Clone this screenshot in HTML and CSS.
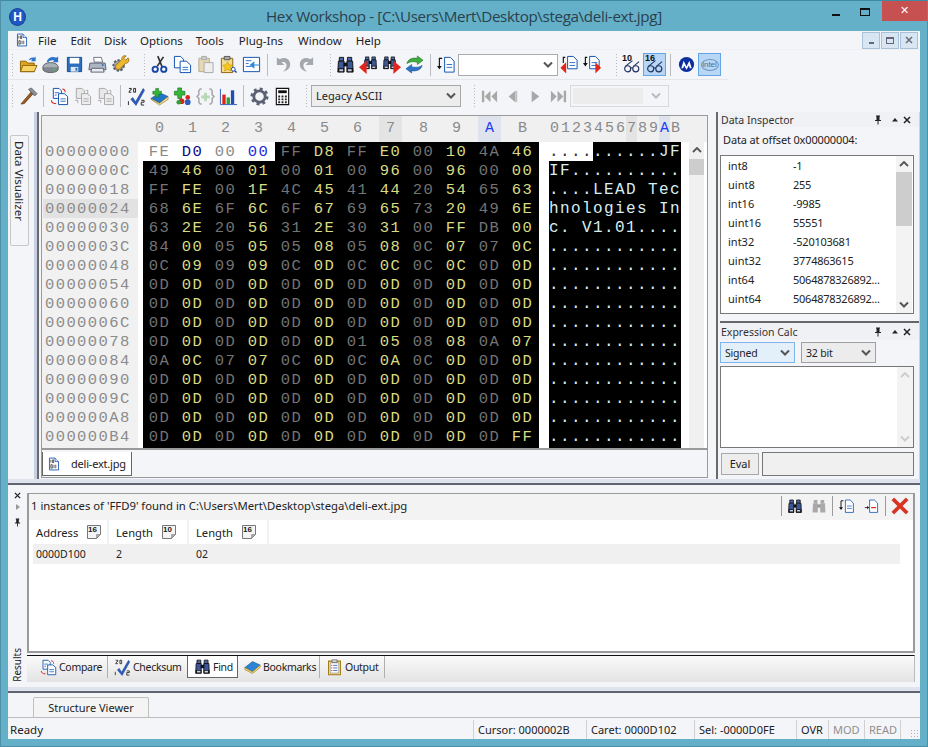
FILE: index.html
```html
<!DOCTYPE html>
<html lang="en">
<head>
<meta charset="utf-8">
<title>Hex Workshop</title>
<link rel="stylesheet" href="styles.css">
</head>
<body>
<svg class="defs" aria-hidden="true">
  <defs>
    <symbol id="doc" viewBox="0 0 20 20"><path d="M4 1.5h8l4.5 4.5v12.5H4z" fill="#fff" stroke="#0d4fb0"/><path d="M12 1.5V6h4.5" fill="#d6e6f8" stroke="#0d4fb0"/><path d="M6.5 9.5h7.5M6.5 12.5h7.5M6.5 15.5h7.5" stroke="#2a6fc8"/></symbol>
    <symbol id="bindoc" viewBox="0 0 20 20"><path d="M3.500 1.500h8l5 5v12h-13z" fill="#fff" stroke="#0d4fb0" stroke-width="1.200"/><path d="M11.500 1.500v5h5" fill="#d6e6f8" stroke="#0d4fb0"/><path d="M5.500 4v4M8 4h1.500v4H8zM5.500 11h2v5h-2zM10 11v5M12.500 11v5" fill="none" stroke="#222"/></symbol>
    <symbol id="folder" viewBox="0 0 20 20"><path d="M1.500 6.500h6l1.500 2h7v9h-14.500z" fill="#e0a51e" stroke="#8a6208"/><path d="M4 11h15l-3 6.500H1.500z" fill="#f7d463" stroke="#8a6208"/><path d="M10 6c1-3 4-4 6-3l1.500-1.500v5h-5l1.500-1.500c-1-.5-2.500 0-4 1z" fill="#2c74c9"/></symbol>
    <symbol id="disk" viewBox="0 0 20 20"><ellipse cx="9" cy="12.500" rx="8" ry="4.500" fill="#aab0b8" stroke="#5b6068"/><path d="M1 13v2c0 2 3.500 3.500 8 3.500s8-1.500 8-3.500v-2" fill="#80868e" stroke="#5b6068"/><circle cx="13" cy="15.500" r="1" fill="#3fd04a"/><path d="M5 7c1-4 6-6 10-4l2-1.500v6h-6l2-1.500c-3-1-5 0-6.500 1.500z" fill="#2c74c9"/></symbol>
    <symbol id="save" viewBox="0 0 20 20"><path d="M2.500 2.500h15v15h-15z" fill="#2c6dbd" stroke="#174a8c"/><path d="M5 3h10v6H5z" fill="#fff"/><path d="M6 12.500h8v5H6z" fill="#dfe6ef"/><path d="M11 13.500h2v3h-2z" fill="#2c6dbd"/></symbol>
    <symbol id="print" viewBox="0 0 20 20"><path d="M6 2.500h8l1.500 5h-9z" fill="#fff" stroke="#6b7280"/><path d="M2 8.500h16l1 7H1z" fill="#aeb6c2" stroke="#5a6270"/><path d="M4 14h12l1 4H3z" fill="#e9edf2" stroke="#5a6270"/><circle cx="15.500" cy="10.500" r="1" fill="#2c6dbd"/></symbol>
    <symbol id="tools" viewBox="0 0 20 20"><circle cx="8" cy="11" r="5.500" fill="#9ea4ad" stroke="#555a62" stroke-width="2" stroke-dasharray="2.500 1.500"/><circle cx="8" cy="11" r="2" fill="#f4f5f8"/><path d="M18 3l-2.500 2.500-2-2L16 1c-3-1-5 1-4.500 3.500L6 10c-1 1-2 3-.5 4.500S9 15 10 14l5.500-5.500C18 9 20 6 18 3z" fill="#edb82e" stroke="#8a6208" stroke-width=".8"/></symbol>
    <symbol id="cut" viewBox="0 0 20 20"><path d="M13 1.500L8 12M7 1.500l6 10.500" stroke="#333" stroke-width="1.800" fill="none" transform="rotate(8 10 10)"/><circle cx="5.500" cy="15" r="2.800" fill="none" stroke="#1546a8" stroke-width="2"/><circle cx="14.500" cy="15" r="2.800" fill="none" stroke="#1546a8" stroke-width="2"/></symbol>
    <symbol id="copy" viewBox="0 0 20 20"><path d="M1.500 1.500h6.500l3 3v9h-9.500z" fill="#fff" stroke="#0d4fb0"/><path d="M7.500 6.500h6.500l4.500 4v8h-11z" fill="#fff" stroke="#0d4fb0"/><path d="M10 13h6M10 15.500h6" stroke="#2a6fc8"/></symbol>
    <symbol id="paste" viewBox="0 0 20 20"><path d="M3 3.500h11v14H3z" fill="#e6d9b2" stroke="#b5ab90"/><path d="M6 1.500h5v3.500H6z" fill="#ccc" stroke="#aaa"/><path d="M8.500 8h9.500v10.500H8.500z" fill="#eee" stroke="#aaa"/></symbol>
    <symbol id="paste2" viewBox="0 0 20 20"><path d="M2.500 3.500h12v15h-12z" fill="#f3dc92" stroke="#8a6208"/><path d="M5.500 1.500h6v3.500h-6z" fill="#aaa" stroke="#555"/><path d="M9 7l1.600 3.300 3.600.5-2.600 2.500.6 3.600L9 15.200l-3.200 1.700.6-3.600-2.600-2.500 3.600-.5z" fill="#f9c714" stroke="#b98a00" stroke-width=".5"/><circle cx="15" cy="15" r="2" fill="#fff" stroke="#1546a8"/><path d="M16.500 16.500l2 2" stroke="#1546a8" stroke-width="1.500"/></symbol>
    <symbol id="insert" viewBox="0 0 20 20"><path d="M1.500 2.500h17v15h-17z" fill="#fff" stroke="#0d4fb0"/><path d="M4 6h6M4 9h3M4 12h6" stroke="#2a6fc8"/><path d="M19 10h-6V6.500L8 10.500l5 4V11h6z" fill="#2c88e0"/></symbol>
    <symbol id="undo" viewBox="0 0 20 20"><path d="M3 2.500v8h8L8 7.500c3-1 6 1 5 5-.5 2-2 3.500-3.500 5 5-1 8-4 7.500-8.500C16.500 4 11 1.500 6 4.500z" fill="#a4a8ac"/></symbol>
    <symbol id="redo" viewBox="0 0 20 20"><path d="M17 2.500v8H9l3-3c-3-1-6 1-5 5 .5 2 2 3.500 3.500 5-5-1-8-4-7.500-8.500C3.500 4 9 1.500 14 4.500z" fill="#a4a8ac"/></symbol>
    <symbol id="bino" viewBox="0 0 20 20"><path d="M3.500 2.500h4.500v4H3.500zM12 2.500h4.500v4H12z" fill="#4c68a8" stroke="#111"/><path d="M2.500 6.500h6v11.500h-6.500zM11.500 6.500h6l.5 11.500h-6.500z" fill="#3b5798" stroke="#111"/><path d="M8 8h4v4H8z" fill="#111"/><path d="M2 14h6.500v4H2zM11.500 14H18v4h-6.500z" fill="#111"/><path d="M3.500 15h4v2h-4zM12.500 15h4v2h-4z" fill="#c8d0e8"/></symbol>
    <symbol id="binog" viewBox="0 0 20 20"><path d="M3.500 2.500h4.500v4H3.500zM12 2.500h4.500v4H12z" fill="#a9a9a9"/><path d="M2.500 6.500h6v11.500h-6.500zM11.500 6.500h6l.5 11.500h-6.500z" fill="#a9a9a9"/><path d="M8 8h4v4H8z" fill="#999"/></symbol>
    <symbol id="binol" viewBox="0 0 20 20"><use href="#bino" x="4" y="0" width="16" height="16"/><path d="M8 6v14L0 13z" fill="#e3241b"/></symbol>
    <symbol id="binor" viewBox="0 0 20 20"><use href="#bino" x="0" y="0" width="16" height="16"/><path d="M12 6v14l8-7z" fill="#e3241b"/></symbol>
    <symbol id="replace" viewBox="0 0 20 20"><path d="M2 9c1-4 5-6.500 11-5.500V1l6 4.500-6 4.500V7.500C8 6.500 5 7 2 9z" fill="#3fae3f" stroke="#1c6e1c" stroke-width=".6"/><path d="M18 11c-1 4-5 6.500-11 5.500V19l-6-4.500L7 10v2.500c5 1 8 .5 11-1.500z" fill="#2c74c9" stroke="#174a8c" stroke-width=".6"/></symbol>
    <symbol id="goto" viewBox="0 0 20 20"><path d="M8 2.500h6l4 4v11.500h-10z" fill="#fff" stroke="#0d4fb0"/><path d="M10 10h6M10 13h6" stroke="#2a6fc8"/><path d="M5.500 3.500h-3v9" fill="none" stroke="#111" stroke-width="1.200"/><path d="M0 11.500h5L2.500 15z" fill="#111"/></symbol>
    <symbol id="prevd" viewBox="0 0 20 20"><path d="M8 1.500h6l4 4v9h-10z" fill="#fff" stroke="#0d4fb0"/><path d="M10 8h6M10 11h6" stroke="#2a6fc8"/><path d="M5.500 2.500h-2v6" fill="none" stroke="#111" stroke-width="1.200"/><path d="M6.500 7.500v12L.5 13.500z" fill="#e3241b"/></symbol>
    <symbol id="nextd" viewBox="0 0 20 20"><path d="M7 1.500h6l4 4v9H7z" fill="#fff" stroke="#0d4fb0"/><path d="M9 8h6M9 11h6" stroke="#2a6fc8"/><path d="M4.500 2.500h-2v7" fill="none" stroke="#111" stroke-width="1.200"/><path d="M0 8.500h5L2.500 12z" fill="#111"/><path d="M13 7.500v12l6-6z" fill="#e3241b"/></symbol>
    <symbol id="glass" viewBox="0 0 20 20"><circle cx="6" cy="14.500" r="3.200" fill="none" stroke="#23355f" stroke-width="1.200"/><circle cx="14.500" cy="14.500" r="3.200" fill="none" stroke="#23355f" stroke-width="1.200"/><path d="M9 14c1-1 1.500-1 2.500 0M3.500 12L11 6M12 12l6-5" fill="none" stroke="#23355f" stroke-width="1.100"/></symbol>
    <symbol id="moto" viewBox="0 0 20 20"><circle cx="10" cy="10" r="8" fill="#0b2fa0"/><path d="M4.500 14l2.500-8 3 6 3-6 2.500 8h-2l-1-3-2.500 4.500L7.500 11l-1 3z" fill="#fff"/></symbol>
    <symbol id="hammer" viewBox="0 0 20 20"><path d="M2 18l2-2.500L13 5l2 2-9.500 10.500z" fill="#9a5a22" stroke="#5f3610" stroke-width=".7"/><path d="M10 2.500l3-1.500 6 6-2.500 2.500z" fill="#8c8f94" stroke="#4a4c50" stroke-width=".7"/></symbol>
    <symbol id="compare" viewBox="0 0 20 20"><path d="M3.500 1.500h6l2.500 2.500v8h-8.500z" fill="#fff" stroke="#0d4fb0"/><path d="M9 7h6l3.500 3v8.500H9z" fill="#fff" stroke="#0d4fb0"/><path d="M11 12.500h5.500M11 15h5.500M5 6h4.500M5 8.500h2" stroke="#2a6fc8"/><path d="M13 2c2 0 3 1.500 3 3.500M1.500 14c0 2 1.500 3.500 5 3.500" fill="none" stroke="#d9231c" stroke-width="1.100"/></symbol>
    <symbol id="compareg" viewBox="0 0 20 20"><path d="M3.500 1.500h6l2.500 2.500v8h-8.500z" fill="#e8e8e8" stroke="#a8a8a8"/><path d="M9 7h6l3.500 3v8.500H9z" fill="#eee" stroke="#a8a8a8"/><path d="M11 12.500h5.500M11 15h5.500" stroke="#aaa"/><path d="M13.500 3.500h2v4M2 14h3v3" fill="none" stroke="#aaa"/></symbol>
    <symbol id="check" viewBox="0 0 20 20"><path d="M6 11l3 4.500L17 1.500l1.500 2L9.500 19.500 4 13z" fill="#2c5cc0" stroke="#12357c" stroke-width=".5"/><path d="M2 1.500h2.500v1.500H3.500L2 5.500h2.500M7 1.500h2v4H7zM1.500 15v4M15 14h3v2h-3v3h3" fill="none" stroke="#111" stroke-width=".9"/></symbol>
    <symbol id="book" viewBox="0 0 20 20"><path d="M1 12l9-6 9 4-9 7z" fill="#1f76c8" stroke="#0f4a86" stroke-width=".6"/><path d="M1 12l9 5 9-7v3l-9 6-9-6z" fill="#f1e2a6" stroke="#8a6208" stroke-width=".6"/><path d="M6 1.500h3v3h3v3H9v3H6V7.500H3v-3h3z" fill="#34b83a" stroke="#146f18" stroke-width=".6"/></symbol>
    <symbol id="bookm" viewBox="0 0 20 20"><path d="M1 10l9-7 9 4-9 8z" fill="#2b84d8" stroke="#0f4a86" stroke-width=".6"/><path d="M1 10l9 5 9-8v3l-9 7-9-4.500z" fill="#f1d97a" stroke="#8a6208" stroke-width=".6"/></symbol>
    <symbol id="plus" viewBox="0 0 20 20"><path d="M5 1h4v3.500h3.500v4H9V12H5V8.500H1.500v-4H5z" fill="#34b83a" stroke="#146f18" stroke-width=".7"/><circle cx="9" cy="15" r="3" fill="#d9231c"/><circle cx="15.500" cy="11" r="2.500" fill="#d9231c"/><circle cx="15.500" cy="16" r="3" fill="#2c5cc0"/><circle cx="6" cy="16" r="2.400" fill="#2fa033"/></symbol>
    <symbol id="brace" viewBox="0 0 20 20"><path d="M6 2H4.500L3 4v4l-2 2 2 2v4l1.500 2H6M14 2h1.500L17 4v4l2 2-2 2v4l-1.500 2H14" fill="none" stroke="#a8a8a8" stroke-width="1.600"/><path d="M8.500 6h3v3h3v3h-3v3h-3v-3h-3V9h3z" fill="#b8d8b8"/></symbol>
    <symbol id="chart" viewBox="0 0 20 20"><path d="M1.500 2v16.500H19" fill="none" stroke="#2c5cc0"/><path d="M3.500 8h3.500v10H3.500z" fill="#d9231c"/><path d="M8 11h3.500v7H8z" fill="#2fa033"/><path d="M12.500 3.500H16V18h-3.500z" fill="#1f4fb5"/></symbol>
    <symbol id="gear" viewBox="0 0 20 20"><circle cx="10" cy="10" r="6" fill="none" stroke="#5b6072" stroke-width="3"/><circle cx="10" cy="10" r="8" fill="none" stroke="#5b6072" stroke-width="3" stroke-dasharray="3 3.280"/><circle cx="10" cy="10" r="2.500" fill="#f4f5f8"/></symbol>
    <symbol id="calc" viewBox="0 0 20 20"><path d="M3.500 1.500h13v17h-13z" fill="#fff" stroke="#111" stroke-width="1.200"/><path d="M5.500 3.500h9v3h-9z" fill="#111"/><path d="M5.500 9h2v2h-2zM9 9h2v2H9zM12.500 9h2v2h-2zM5.500 12h2v2h-2zM9 12h2v2H9zM12.500 12h2v2h-2zM5.500 15h2v2h-2zM9 15h2v2H9zM12.500 15h2v2h-2z" fill="#222"/></symbol>
    <symbol id="first" viewBox="0 0 20 20"><path d="M2 4h2.500v12H2zM11 4v12L5 10zM18 4v12l-6-6z" fill="#a8a8a8"/></symbol>
    <symbol id="prev" viewBox="0 0 20 20"><path d="M13 4v12L6 10z" fill="#a8a8a8"/><path d="M13 4h2v12h-2z" fill="#c0c0c0"/></symbol>
    <symbol id="next" viewBox="0 0 20 20"><path d="M6 4v12l8-6z" fill="#a8a8a8"/></symbol>
    <symbol id="last" viewBox="0 0 20 20"><path d="M15.500 4H18v12h-2.500zM2 4v12l6-6zM9 4v12l6-6z" fill="#a8a8a8"/></symbol>
    <symbol id="output" viewBox="0 0 20 20"><path d="M3 2.500h14v16H3z" fill="#f8e7a8" stroke="#a07a10" stroke-width="1.200"/><path d="M5 4.500h10v12H5z" fill="#fff" stroke="#444" stroke-width=".5"/><path d="M7 1h6v3H7z" fill="#ddd" stroke="#444" stroke-width=".7"/><path d="M8.500 7.500h5M8.500 10.500h5M8.500 13.500h5" stroke="#2c5cc0"/><path d="M6 7.500h1.500M6 10.500h1.500M6 13.500h1.500" stroke="#d9231c"/></symbol>
    <symbol id="remove" viewBox="0 0 20 20"><path d="M7 2.500h6l4 4v11.500H7z" fill="#fff" stroke="#0d4fb0"/><path d="M9 12h6" stroke="#e3241b" stroke-width="1.500"/><path d="M1 12h4" stroke="#111"/><path d="M4 10l2.500 2-2.500 2z" fill="#111"/></symbol>
    <symbol id="bigx" viewBox="0 0 20 20"><path d="M1 3.500L3.500 1 10 7.500 16.500 1 19 3.500 12.500 10l6.500 6.500-2.500 2.500L10 12.500 3.500 19 1 16.500 7.500 10z" fill="#e0301e" stroke="#a81e10" stroke-width=".6"/></symbol>
    <symbol id="sort" viewBox="0 0 14 14"><path d="M.5.500h13v9l-4 4h-9z" fill="#f4f4f4" stroke="#777"/><path d="M9.500 13.500v-4h4z" fill="#aaa" stroke="#777" stroke-width=".5"/></symbol>
    <symbol id="pin" viewBox="0 0 8 10"><path d="M2 .5h4v1H5.500v3.500h1.500v1H1v-1h1.500V1.500H2zM3.500 6h1v3.500h-1z" fill="#222"/></symbol>
    <symbol id="tri" viewBox="0 0 8 8"><path d="M4 2l3 3.500H1z" fill="#222"/></symbol>
    <symbol id="x" viewBox="0 0 8 8"><path d="M1 1l6 6M7 1L1 7" stroke="#222" stroke-width="1.500"/></symbol>
    <symbol id="chev" viewBox="0 0 10 8"><path d="M1 1.500l4 4 4-4" fill="none" stroke="currentColor" stroke-width="2"/></symbol>
    <symbol id="chevup" viewBox="0 0 10 8"><path d="M1 6l4-4 4 4" fill="none" stroke="currentColor" stroke-width="1.800"/></symbol>
  </defs>
</svg>

<div class="window">
  <header class="titlebar">
    <span class="app-logo">H</span>
    <span class="title">Hex Workshop - [C:\Users\Mert\Desktop\stega\deli-ext.jpg]</span>
    <span class="winctl win-min"></span>
    <span class="winctl win-max"></span>
    <span class="winctl win-close">✕</span>
  </header>

  <div class="client">
    <nav class="menubar">
      <svg class="menu-icon"><use href="#bindoc"/></svg>
      <span class="m-file">File</span><span class="m-edit">Edit</span><span class="m-disk">Disk</span><span class="m-options">Options</span><span class="m-tools">Tools</span><span class="m-plug">Plug-Ins</span><span class="m-window">Window</span><span class="m-help">Help</span>
      <span class="mdi-buttons">
        <span class="mdi"><span class="mdi-min"></span></span>
        <span class="mdi"><span class="mdi-res"></span></span>
        <span class="mdi"><svg class="mdi-x"><use href="#x"/></svg></span>
      </span>
    </nav>

    <div class="toolbar tb-one">
      <span class="grip first-grip"></span>
      <span class="tb"><svg><use href="#folder"/></svg></span>
      <span class="tb"><svg><use href="#disk"/></svg></span>
      <span class="tb"><svg><use href="#save"/></svg></span>
      <span class="tb"><svg><use href="#print"/></svg></span>
      <span class="tb"><svg><use href="#tools"/></svg></span>
      <span class="grip"></span>
      <span class="tb"><svg><use href="#cut"/></svg></span>
      <span class="tb"><svg><use href="#copy"/></svg></span>
      <span class="tb"><svg><use href="#paste"/></svg></span>
      <span class="tb"><svg><use href="#paste2"/></svg></span>
      <span class="tb"><svg><use href="#insert"/></svg></span>
      <span class="sep"></span>
      <span class="tb"><svg><use href="#undo"/></svg></span>
      <span class="tb"><svg><use href="#redo"/></svg></span>
      <span class="grip"></span>
      <span class="tb"><svg><use href="#bino"/></svg></span>
      <span class="tb"><svg><use href="#binol"/></svg></span>
      <span class="tb"><svg><use href="#binor"/></svg></span>
      <span class="tb"><svg><use href="#replace"/></svg></span>
      <span class="sep"></span>
      <span class="tb"><svg><use href="#goto"/></svg></span>
      <span class="combo find-combo"><span class="combo-value"></span><svg class="chev"><use href="#chev"/></svg></span>
      <span class="tb"><svg><use href="#prevd"/></svg></span>
      <span class="tb"><svg><use href="#nextd"/></svg></span>
      <span class="grip"></span>
      <span class="tb tb-num"><i>10</i><svg><use href="#glass"/></svg></span>
      <span class="tb tb-num on"><i>16</i><svg><use href="#glass"/></svg></span>
      <span class="sep"></span>
      <span class="tb"><svg><use href="#moto"/></svg></span>
      <span class="tb on"><span class="intel">intel</span></span>
    </div>

    <div class="toolbar tb-two">
      <span class="grip first-grip"></span>
      <span class="tb"><svg><use href="#hammer"/></svg></span>
      <span class="sep"></span>
      <span class="tb"><svg><use href="#compare"/></svg></span>
      <span class="tb"><svg><use href="#compareg"/></svg></span>
      <span class="tb"><svg><use href="#compareg"/></svg></span>
      <span class="sep"></span>
      <span class="tb"><svg><use href="#check"/></svg></span>
      <span class="tb"><svg><use href="#book"/></svg></span>
      <span class="tb"><svg><use href="#plus"/></svg></span>
      <span class="tb"><svg><use href="#brace"/></svg></span>
      <span class="tb"><svg><use href="#chart"/></svg></span>
      <span class="sep"></span>
      <span class="tb"><svg><use href="#gear"/></svg></span>
      <span class="tb"><svg><use href="#calc"/></svg></span>
      <span class="grip"></span>
      <span class="combo ascii-combo"><span class="combo-value">Legacy ASCII</span><svg class="chev"><use href="#chev"/></svg></span>
      <span class="grip media-grip"></span>
      <span class="tb"><svg><use href="#first"/></svg></span>
      <span class="tb"><svg><use href="#prev"/></svg></span>
      <span class="tb"><svg><use href="#next"/></svg></span>
      <span class="tb"><svg><use href="#last"/></svg></span>
      <span class="combo media-combo"><span class="combo-fill"></span><svg class="chev"><use href="#chev"/></svg></span>
    </div>

    <main class="workspace">
      <aside class="left-dock">
        <span class="vtab">Data Visualizer</span>
      </aside>

      <section class="editor">
        <div class="hexview">
          <div class="hex-head">
            <span class="corner"></span>
            <div class="hex-cols">
              <span>0</span><span>1</span><span>2</span><span>3</span><span>4</span><span>5</span><span>6</span><span class="hot">7</span><span>8</span><span>9</span><span class="hot blue">A</span><span>B</span>
            </div>
            <div class="ascii-cols"><span>0</span><span>1</span><span>2</span><span>3</span><span>4</span><span>5</span><span>6</span><span class="ahot">7</span><span>8</span><span>9</span><span class="ahot blue">A</span><span>B</span></div>
            <span class="head-end"></span>
          </div>
          <div class="hex-body">
            <div class="addr">
              <div>00000000</div><div>0000000C</div><div>00000018</div><div class="cur">00000024</div><div>00000030</div><div>0000003C</div><div>00000048</div><div>00000054</div><div>00000060</div><div>0000006C</div><div>00000078</div><div>00000084</div><div>00000090</div><div>0000009C</div><div>000000A8</div><div>000000B4</div>
            </div>
            <div class="hex-data">
              <div class="hx"><span class="sel">FE</span><span class="sel s1">D0</span><span class="sel">00</span><span class="sel s2">00</span><span>FF</span><span>D8</span><span>FF</span><span>E0</span><span>00</span><span>10</span><span>4A</span><span>46</span></div>
              <div class="hx"><span>49</span><span>46</span><span>00</span><span>01</span><span>00</span><span>01</span><span>00</span><span>96</span><span>00</span><span>96</span><span>00</span><span>00</span></div>
              <div class="hx"><span>FF</span><span>FE</span><span>00</span><span>1F</span><span>4C</span><span>45</span><span>41</span><span>44</span><span>20</span><span>54</span><span>65</span><span>63</span></div>
              <div class="hx"><span>68</span><span>6E</span><span>6F</span><span>6C</span><span>6F</span><span>67</span><span>69</span><span>65</span><span>73</span><span>20</span><span>49</span><span>6E</span></div>
              <div class="hx"><span>63</span><span>2E</span><span>20</span><span>56</span><span>31</span><span>2E</span><span>30</span><span>31</span><span>00</span><span>FF</span><span>DB</span><span>00</span></div>
              <div class="hx"><span>84</span><span>00</span><span>05</span><span>05</span><span>05</span><span>08</span><span>05</span><span>08</span><span>0C</span><span>07</span><span>07</span><span>0C</span></div>
              <div class="hx"><span>0C</span><span>09</span><span>09</span><span>09</span><span>0C</span><span>0D</span><span>0C</span><span>0C</span><span>0C</span><span>0C</span><span>0D</span><span>0D</span></div>
              <div class="hx"><span>0D</span><span>0D</span><span>0D</span><span>0D</span><span>0D</span><span>0D</span><span>0D</span><span>0D</span><span>0D</span><span>0D</span><span>0D</span><span>0D</span></div>
              <div class="hx"><span>0D</span><span>0D</span><span>0D</span><span>0D</span><span>0D</span><span>0D</span><span>0D</span><span>0D</span><span>0D</span><span>0D</span><span>0D</span><span>0D</span></div>
              <div class="hx"><span>0D</span><span>0D</span><span>0D</span><span>0D</span><span>0D</span><span>0D</span><span>0D</span><span>0D</span><span>0D</span><span>0D</span><span>0D</span><span>0D</span></div>
              <div class="hx"><span>0D</span><span>0D</span><span>0D</span><span>0D</span><span>0D</span><span>0D</span><span>01</span><span>05</span><span>08</span><span>08</span><span>0A</span><span>07</span></div>
              <div class="hx"><span>0A</span><span>0C</span><span>07</span><span>07</span><span>0C</span><span>0D</span><span>0C</span><span>0A</span><span>0C</span><span>0D</span><span>0D</span><span>0D</span></div>
              <div class="hx"><span>0D</span><span>0D</span><span>0D</span><span>0D</span><span>0D</span><span>0D</span><span>0D</span><span>0D</span><span>0D</span><span>0D</span><span>0D</span><span>0D</span></div>
              <div class="hx"><span>0D</span><span>0D</span><span>0D</span><span>0D</span><span>0D</span><span>0D</span><span>0D</span><span>0D</span><span>0D</span><span>0D</span><span>0D</span><span>0D</span></div>
              <div class="hx"><span>0D</span><span>0D</span><span>0D</span><span>0D</span><span>0D</span><span>0D</span><span>0D</span><span>0D</span><span>0D</span><span>0D</span><span>0D</span><span>0D</span></div>
              <div class="hx"><span>0D</span><span>0D</span><span>0D</span><span>0D</span><span>0D</span><span>0D</span><span>0D</span><span>0D</span><span>0D</span><span>0D</span><span>0D</span><span>FF</span></div>
            </div>
            <div class="ascii-data">
              <div><span class="sel">....</span>......JF</div>
              <div>IF..........</div>
              <div>....LEAD Tec</div>
              <div>hnologies In</div>
              <div>c. V1.01....</div>
              <div>............</div>
              <div>............</div>
              <div>............</div>
              <div>............</div>
              <div>............</div>
              <div>............</div>
              <div>............</div>
              <div>............</div>
              <div>............</div>
              <div>............</div>
              <div>............</div>
            </div>
            <div class="vscroll hex-scroll">
              <svg class="arrow"><use href="#chevup"/></svg>
              <span class="thumb hex-thumb"></span>
            </div>
          </div>
        </div>
        <div class="doc-tabs">
          <span class="doc-tab"><svg><use href="#bindoc"/></svg><span>deli-ext.jpg</span></span>
        </div>
      </section>

      <aside class="right-dock">
        <section class="inspector">
          <div class="pane-title"><span>Data Inspector</span><svg class="pt-pin"><use href="#pin"/></svg><svg class="pt-tri"><use href="#tri"/></svg><svg class="pt-x"><use href="#x"/></svg></div>
          <div class="offset">Data at offset 0x00000004:</div>
          <div class="listbox">
            <div class="rows">
              <div><span>int8</span><span>-1</span></div>
              <div><span>uint8</span><span>255</span></div>
              <div><span>int16</span><span>-9985</span></div>
              <div><span>uint16</span><span>55551</span></div>
              <div><span>int32</span><span>-520103681</span></div>
              <div><span>uint32</span><span>3774863615</span></div>
              <div><span>int64</span><span>5064878326892...</span></div>
              <div><span>uint64</span><span>5064878326892...</span></div>
            </div>
            <div class="vscroll list-scroll">
              <svg class="arrow"><use href="#chevup"/></svg>
              <span class="thumb list-thumb"></span>
              <svg class="arrow arrow-end"><use href="#chev"/></svg>
            </div>
          </div>
        </section>
        <section class="calc">
          <div class="pane-title"><span>Expression Calc</span><svg class="pt-pin"><use href="#pin"/></svg><svg class="pt-tri"><use href="#tri"/></svg><svg class="pt-x"><use href="#x"/></svg></div>
          <div class="calc-selects">
            <span class="combo signed"><span class="combo-value">Signed</span><svg class="chev"><use href="#chev"/></svg></span>
            <span class="combo bits"><span class="combo-value">32 bit</span><svg class="chev"><use href="#chev"/></svg></span>
          </div>
          <div class="calc-box">
            <div class="vscroll calc-scroll">
              <svg class="arrow"><use href="#chevup"/></svg>
              <svg class="arrow arrow-end"><use href="#chev"/></svg>
            </div>
          </div>
          <div class="eval-row"><span class="eval">Eval</span><span class="eval-field"></span></div>
        </section>
      </aside>
    </main>

    <section class="results">
      <aside class="res-strip">
        <svg class="rs-x"><use href="#x"/></svg>
        <span class="rs-tri"></span>
        <svg class="rs-pin"><use href="#pin"/></svg>
        <span class="rs-label">Results</span>
      </aside>
      <div class="res-main">
        <div class="res-frame">
          <div class="res-head">
            <span class="res-text">1 instances of 'FFD9' found in C:\Users\Mert\Desktop\stega\deli-ext.jpg</span>
            <span class="rh-sep"></span>
            <svg class="rh-btn"><use href="#bino"/></svg>
            <svg class="rh-btn"><use href="#binog"/></svg>
            <span class="rh-sep"></span>
            <svg class="rh-btn rh-wide"><use href="#goto"/></svg>
            <svg class="rh-btn rh-wide"><use href="#remove"/></svg>
            <span class="rh-sep"></span>
            <svg class="rh-btn rh-x"><use href="#bigx"/></svg>
          </div>
          <div class="res-list">
            <div class="col-heads">
              <span class="col-h"><span>Address</span><span class="sort"><svg><use href="#sort"/></svg><i>16</i></span></span>
              <span class="col-h"><span>Length</span><span class="sort"><svg><use href="#sort"/></svg><i>10</i></span></span>
              <span class="col-h"><span>Length</span><span class="sort"><svg><use href="#sort"/></svg><i>16</i></span></span>
            </div>
            <div class="res-row"><span>0000D100</span><span>2</span><span>02</span></div>
          </div>
        </div>
        <div class="res-tabs">
          <span class="rt t-compare"><svg><use href="#compare"/></svg>Compare</span>
          <span class="rt t-check"><svg><use href="#check"/></svg>Checksum</span>
          <span class="rt t-find"><svg><use href="#bino"/></svg>Find</span>
          <span class="rt t-book"><svg><use href="#bookm"/></svg>Bookmarks</span>
          <span class="rt t-out"><svg><use href="#output"/></svg>Output</span>
        </div>
      </div>
    </section>

    <section class="structure">
      <span class="struct-tab">Structure Viewer</span>
    </section>

    <footer class="status">
      <span class="st-ready">Ready</span>
      <span class="st-cell st-cursor">Cursor: 0000002B</span>
      <span class="st-cell st-caret">Caret: 0000D102</span>
      <span class="st-cell st-sel">Sel: -0000D0FE</span>
      <span class="st-cell st-ovr">OVR</span>
      <span class="st-cell st-mod off">MOD</span>
      <span class="st-cell st-read off">READ</span>
      <span class="st-grip"></span>
    </footer>
  </div>
</div>
</body>
</html>
```

FILE: styles.css
```css
* { box-sizing: border-box; }
html, body { margin: 0; height: 100%; }
body { width: 928px; height: 747px; overflow: hidden; background: #63b0c8; font: 11px "Noto Sans", Tahoma, sans-serif; color: #222; }
.defs { width: 0; height: 0; display: block; overflow: hidden; }
svg { display: block; }

.window { width: 928px; height: 747px; display: flex; flex-direction: column; border: 1px solid #4d8fa6; border-top-color: #3f8aa3; }
.titlebar { height: 30px; display: flex; align-items: flex-start; flex: none; }
.app-logo { width: 16px; height: 16px; border-radius: 50%; margin: 8px 0 0 9px; background: #1f57c4; color: #fff; font: bold 12px/16px "Liberation Sans", sans-serif; text-align: center; box-shadow: 0 0 0 1px #173f95; }
.title { width: 394px; margin: 5px 0 0 241px; font: 15.2px/20px "Open Sans", sans-serif; color: #2b3f4c; white-space: nowrap; letter-spacing: -.36px; }
.winctl { display: block; flex: none; }
.win-min { width: 8px; height: 2px; background: #111; margin: 13px 0 0 172px; }
.win-max { width: 10px; height: 8px; border: 1px solid #111; border-top-width: 2px; margin: 7px 0 0 20px; }
.win-close { width: 45px; height: 20px; margin: 0 0 0 12px; background: #c75050; color: #fff; font: bold 11px/20px "DejaVu Sans", sans-serif; text-align: center; }

.client { width: 912px; margin-left: 7px; height: 708px; background: #f4f5f8; display: flex; flex-direction: column; flex: none; }

.menubar { height: 19px; display: flex; align-items: center; flex: none; border-bottom: 1px solid #eef0f3; }
.menu-icon { width: 14px; height: 14px; margin: 0 0 0 7px; }
.menubar > span { display: block; line-height: 17px; color: #222; font-size: 11.5px; }
.m-file { margin-left: 9px; }
.m-edit { margin-left: 14px; }
.m-disk { margin-left: 13px; }
.m-options { margin-left: 13px; }
.m-tools { margin-left: 13px; }
.m-plug { margin-left: 15px; }
.m-window { margin-left: 15px; }
.m-help { margin-left: 14px; }
.menubar > .mdi-buttons { margin-left: auto; display: flex; gap: 1px; padding-right: 2px; }
.mdi { width: 18px; height: 17px; background: #d8e5f3; border: 1px solid #a9c2da; display: flex; align-items: center; justify-content: center; }
.mdi-min { width: 5px; height: 2px; background: #667; margin-top: 6px; }
.mdi-res { width: 8px; height: 7px; border: 1px solid #667; border-top-width: 2px; }
.mdi-x { width: 8px; height: 8px; opacity: .6; }

.toolbar { display: flex; align-items: center; padding-left: 3px; flex: none; }
.tb-one { height: 30px; width: 720px; border-bottom: 1px solid #e4e6ea; }
.tb-two { height: 32px; }
.tb { width: 23px; height: 23px; display: flex; align-items: center; justify-content: center; flex: none; position: relative; }
.tb svg { width: 19px; height: 19px; }
.tb.on { background: #b8d6f6; border: 1px solid #63a5e6; }
.tb-num i { position: absolute; left: 2px; top: 0; font: bold 9px/10px "Liberation Sans", sans-serif; color: #111; }
.tb-num.on i { left: 1px; top: -1px; }
.intel { width: 18px; height: 12px; border: 1px solid #6f93b8; border-radius: 50%; font: 8px/10px "Liberation Sans", sans-serif; color: #4b6f94; text-align: center; }
.grip { width: 3px; height: 22px; margin: 0 2px 0 11px; flex: none; background: repeating-linear-gradient(to bottom, #b5b8bd 0 1px, transparent 1px 3px) center / 1px 100% no-repeat; }
.first-grip { margin: 0 3px 0 0; }
.media-grip { margin-left: 12px; }
.sep { width: 1px; height: 22px; background: #b9bcc1; margin: 0 4px; flex: none; }
.tb-two .sep { margin: 0 4px 0 3px; }
.combo { display: flex; align-items: center; flex: none; background: #fff; border: 1px solid #ababab; height: 22px; }
.combo-value { flex: 1; padding-left: 4px; font-size: 11px; line-height: 18px; white-space: nowrap; }
.chev { width: 10px; height: 8px; margin-right: 4px; color: #555; flex: none; }
.find-combo { width: 100px; }
.ascii-combo { width: 150px; background: #ededed; border-color: #a8a8a8; margin-left: 1px; }
.media-combo { width: 99px; background: #f4f5f8; border-color: #d9d9d9; padding: 2px; }
.media-combo .chev { color: #bbb; margin: 0 5px 0 8px; }
.combo-fill { flex: 1; height: 16px; background: #ececec; }

.workspace { display: flex; height: 371px; flex: none; }
.left-dock { width: 29px; flex: none; border-right: 3px solid #c7cfe3; padding: 23px 0 0 2px; }
.vtab { display: block; width: 19px; height: 111px; background: #f4f5f8; border: 1px solid #c8c8c8; border-radius: 2px; writing-mode: vertical-rl; padding: 5px 0 0 0; font-size: 11.5px; line-height: 17px; white-space: nowrap; }
.editor { width: 681px; flex: none; border-left: 2px solid #6a6a6a; border-right: 2px solid #6a6a6a; padding: 3px 8px 5px 2px; display: flex; flex-direction: column; }
.hexview { border: 1px solid #9a9a9a; border-bottom: 2px solid #9a9a9a; height: 335px; display: flex; flex-direction: column; flex: none; background: #f2f2f2; }
.hex-head { display: flex; height: 26px; background: #f0f0f0; flex: none; }
.corner { width: 101px; flex: none; }
.hex-cols { display: grid; grid-template-columns: repeat(12, 33px); width: 396px; flex: none; font: 15px/25px "Liberation Mono", monospace; color: #8a8a8a; text-align: center; }
.hot { background: #e4e4e4; margin: 0 5px; }
.ahot { background: #e4e4e4; }
.blue { color: #1a3cf0; background: #dfe3ee; }
.ascii-cols { display: grid; grid-template-columns: repeat(12, 11px); margin-left: 10px; font: 15px/25px "Liberation Mono", monospace; color: #8a8a8a; text-align: center; width: 132px; flex: none; }
.head-end { flex: 1; }
.hex-body { display: flex; flex: 1; background: #fff; min-height: 0; }
.addr { width: 96px; flex: none; background: #f1f1f1; margin-right: 5px; font: 15.5px/17px "Liberation Mono", monospace; letter-spacing: 1.4px; color: #8b8b8b; padding-left: 1px; }
.addr div { height: 19px; padding: 2px 0 0 2px; }
.addr .cur { background: #e2e2e2; }
.hex-data { width: 396px; flex: none; background: #000; height: 306px; }
.hx { display: grid; grid-template-columns: repeat(12, 33px); height: 19px; font: 15.5px/17px "Liberation Mono", monospace; letter-spacing: 1.4px; text-align: center; color: #747474; }
.hx span { padding-top: 2px; }
.hx span:nth-child(even) { color: #d8dc84; }
.hx .sel { background: #fff; color: #8a8a8a; }
.hx .sel.s1 { color: #0a0a8c; }
.hx .sel.s2 { color: #1a2ae0; }
.ascii-data { width: 132px; margin-left: 10px; flex: none; background: #000; height: 306px; font: 16px/17px "Liberation Mono", monospace; letter-spacing: 1.4px; color: #d8eef0; }
.ascii-data div { height: 19px; padding-top: 2px; white-space: pre; }
.ascii-data .sel { background: #fff; color: #333; display: inline-block; height: 19px; margin-top: -2px; padding-top: 2px; }
.vscroll { flex: none; background: #f3f3f3; display: flex; flex-direction: column; align-items: center; position: relative; }
.arrow { width: 10px; height: 8px; color: #555; margin: 4px 0; flex: none; }
.hex-scroll { width: 15px; margin-left: 8px; height: 306px; background: #f0f0f0; }
.thumb { display: block; width: 100%; background: #cdcdcd; flex: none; }
.hex-thumb { height: 16px; margin-top: 1px; }
.doc-tabs { flex: 1; padding: 2px 0 0 0; border: 1px solid #9a9a9a; border-top: 0; }
.doc-tab { width: 90px; height: 24px; background: #fff; border: 1px solid #666; border-top: 0; display: flex; align-items: center; padding-left: 4px; font-size: 11px; letter-spacing: -.2px; white-space: nowrap; }
.doc-tab svg { width: 14px; height: 14px; margin-right: 10px; flex: none; }

.right-dock { width: 202px; flex: none; border-right: 1px solid #cfd2d6; display: flex; flex-direction: column; padding-left: 2px; }
.inspector { height: 211px; flex: none; border-bottom: 2px solid #666; }
.pane-title { height: 15px; display: flex; align-items: center; padding-left: 1px; font-size: 10.5px; line-height: 14px; color: #333; background: #f0f1f4; }
.pane-title span { flex: 1; }
.pt-pin { width: 8px; height: 10px; margin-right: 9px; }
.pt-tri { width: 8px; height: 8px; margin-right: 4px; }
.pt-x { width: 8px; height: 8px; margin-right: 8px; }
.offset { height: 28px; line-height: 25px; padding-left: 3px; font-size: 11px; letter-spacing: -.15px; color: #222; }
.listbox { width: 194px; height: 159px; background: #fff; border: 1px solid #777; display: flex; }
.rows { flex: 1; padding: 0 0 0 7px; font-size: 11px; }
.rows div { display: grid; grid-template-columns: 65px 1fr; height: 19px; line-height: 19px; white-space: nowrap; }
.rows span:last-child { letter-spacing: -.25px; }
.list-scroll { width: 16px; margin-right: 1px; height: 157px; }
.arrow-end { position: absolute; bottom: 0; }
.list-thumb { height: 54px; }
.calc { flex: 1; }
.calc .pane-title { height: 17px; margin-bottom: 1px; }
.calc-selects { display: flex; gap: 6px; height: 23px; align-items: flex-start; padding-top: 1px; }
.calc-selects .combo-value { font-size: 10.5px; letter-spacing: -.2px; }
.signed { width: 75px; height: 21px; background: #e3f0fa; border-color: #7eb4ea; }
.bits { width: 75px; height: 21px; background: #ececec; border-color: #a0a0a0; }
.calc-box { width: 194px; height: 82px; background: #fff; border: 1px solid #777; display: flex; justify-content: flex-end; margin-top: 2px; }
.calc-scroll { width: 16px; height: 80px; }
.calc-scroll .arrow { color: #ccc; }
.eval-row { display: flex; gap: 3px; margin-top: 4px; padding-left: 1px; align-items: center; }
.eval { width: 38px; height: 22px; background: #ededed; border: 1px solid #a8a8a8; font-size: 11px; line-height: 20px; text-align: center; }
.eval-field { width: 152px; height: 24px; background: #f0f0f0; border: 1px solid #777; }

.results { height: 199px; flex: none; display: flex; border-top: 2px solid #5f6470; box-shadow: 0 -4px 0 #dfe3ee; position: relative; }
.res-strip { width: 19px; flex: none; display: flex; flex-direction: column; align-items: center; padding-top: 7px; }
.rs-x { width: 7px; height: 7px; }
.rs-tri { width: 0; height: 0; border-left: 4px solid #999; border-top: 3px solid transparent; border-bottom: 3px solid transparent; margin-top: 5px; }
.rs-pin { width: 7px; height: 9px; margin-top: 8px; }
.rs-label { margin-top: auto; margin-bottom: 0; writing-mode: vertical-rl; transform: rotate(180deg); font-size: 10px; line-height: 13px; }
.res-main { flex: 1; display: flex; flex-direction: column; padding-top: 8px; }
.res-frame { height: 160px; border: 2px solid #9a9a9a; border-top-width: 1px; width: 888px; background: #fff; flex: none; }
.res-head { height: 26px; background: #f3f3f3; display: flex; align-items: center; padding-left: 2px; }
.res-text { margin-right: auto; margin-bottom: 4px; font-size: 11.3px; white-space: nowrap; color: #222; }
.rh-sep { width: 1px; height: 20px; background: #9a9a9a; margin: 0 1px 2px; flex: none; }
.rh-btn { width: 16px; height: 16px; margin: 0 4px 2px; flex: none; }
.rh-wide { margin: 0 4.5px 2px; }
.rh-x { width: 18px; height: 18px; }
.res-list { padding-left: 4px; }
.col-heads { display: flex; height: 24px; }
.col-h { width: 80px; display: flex; align-items: center; padding-left: 7px; border-right: 2px solid #eef3f8; font-size: 11.2px; }
.col-h:first-child { width: 76px; padding-left: 3px; }
.col-h > span:first-child { flex: 1; }
.col-h .sort { margin-right: 11px; }
.col-h:first-child .sort { margin-right: 6px; }
.sort { width: 14px; height: 14px; position: relative; flex: none; }
.sort svg { width: 14px; height: 14px; }
.sort i { position: absolute; left: 1px; top: 0; font: bold 8px/9px "Liberation Sans", sans-serif; color: #222; }
.res-row { width: 867px; height: 20px; background: #f0f0f0; display: grid; grid-template-columns: 80px 80px 1fr; font-size: 10.5px; line-height: 20px; padding-left: 3px; color: #222; }
.res-tabs { width: 888px; height: 27px; margin-top: 2px; border-top: 1px solid #111; border-right: 1px solid #bbb; background: linear-gradient(#fafafa, #e3e3e3); display: flex; font-size: 10.5px; letter-spacing: -.3px; color: #222; padding-left: 12px; flex: none; }
.rt { display: flex; align-items: center; height: 22px; padding-left: 1px; border-right: 1px solid #b0b0b0; white-space: nowrap; flex: none; }
.rt svg { width: 17px; height: 17px; margin-right: 2px; flex: none; }
.t-compare { width: 69px; }
.t-check { width: 79px; padding-left: 6px; border-right: 0; }
.t-find { width: 51px; background: #fff; border: 1px solid #666; border-top: 0; padding-left: 6px; }
.t-book { width: 82px; padding-left: 6px; }
.t-out { width: 65px; padding-left: 6px; }

.structure { height: 27px; flex: none; border-top: 2px solid #5f6470; box-shadow: 0 -4px 0 #dfe3ee; margin-top: 9px; padding: 4px 0 0 25px; border-bottom: 1px solid #bcbcbc; }
.struct-tab { display: block; width: 116px; height: 20px; background: #f4f4f4; border: 1px solid #c0c0c0; border-bottom: 0; border-radius: 2px 2px 0 0; font-size: 11px; line-height: 20px; text-align: center; color: #222; }

.status { flex: 1; display: flex; align-items: flex-end; font-size: 11px; color: #222; }
.st-ready { width: 465px; height: 19px; line-height: 19px; padding-left: 2px; flex: none; font-size: 11.5px; }
.st-cell { height: 19px; line-height: 19px; border-left: 1px solid #d0d0d0; padding-left: 4px; flex: none; white-space: nowrap; }
.st-cursor { width: 113px; }
.st-caret { width: 108px; }
.st-sel { width: 102px; }
.st-ovr { width: 32px; }
.st-mod { width: 36px; }
.st-read { width: 37px; border-right: 1px solid #d0d0d0; }
.off { color: #8f8f8f; }
.st-grip { width: 8px; height: 8px; margin: 0 0 2px 9px; background: radial-gradient(circle, #b0b0b0 1px, transparent 1px) 0 0 / 3px 3px; }
```
